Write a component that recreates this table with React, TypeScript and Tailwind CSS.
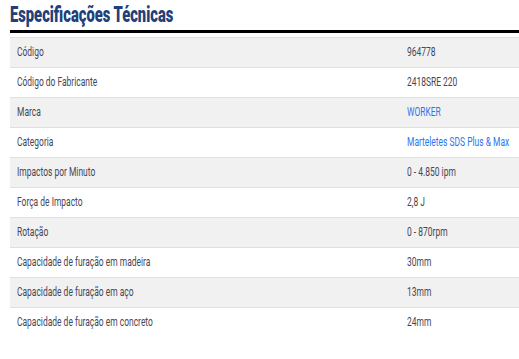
const specs: { label: string; value: string; link?: boolean }[] = [
  { label: "Código", value: "964778" },
  { label: "Código do Fabricante", value: "2418SRE 220" },
  { label: "Marca", value: "WORKER", link: true },
  { label: "Categoria", value: "Marteletes SDS Plus & Max", link: true },
  { label: "Impactos por Minuto", value: "0 - 4.850 ipm" },
  { label: "Força de Impacto", value: "2,8 J" },
  { label: "Rotação", value: "0 - 870rpm" },
  { label: "Capacidade de furação em madeira", value: "30mm" },
  { label: "Capacidade de furação em aço", value: "13mm" },
  { label: "Capacidade de furação em concreto", value: "24mm" },
];

// the source uses a condensed face; Roboto squeezed horizontally stands in for it
const Narrow = ({ children }: { children: React.ReactNode }) => (
  <span className="inline-block whitespace-nowrap origin-left scale-x-[0.65]">{children}</span>
);

export default function App() {
  return (
    <div className="pl-[10px] pt-[2px] bg-white min-h-[359px] font-['Roboto',sans-serif] overflow-hidden">
      <h2 className="text-[22px] leading-[26px] font-black text-[#21407a] whitespace-nowrap">
        <span className="inline-block origin-left scale-x-[0.67]">Especificações Técnicas</span>
      </h2>
      <div className="h-[3px] bg-black mt-[2px]" />
      <table className="w-full table-fixed mt-[4px] border-collapse text-[13px] text-[#474756]">
        <tbody>
          {specs.map((s, i) => (
            <tr
              key={s.label}
              className={
                i % 2 === 0
                  ? "bg-[#f1f1f1] border-t border-[#dedee6]"
                  : "bg-white border-t border-[#dedee6]"
              }
            >
              <td className="h-[30px] pl-[7px] w-[397px] pb-[2px]">
                <Narrow>{s.label}</Narrow>
              </td>
              <td className={s.link ? "text-[#2f74f0] pb-[2px]" : "pb-[2px]"}>
                <Narrow>{s.value}</Narrow>
              </td>
            </tr>
          ))}
        </tbody>
      </table>
    </div>
  );
}
